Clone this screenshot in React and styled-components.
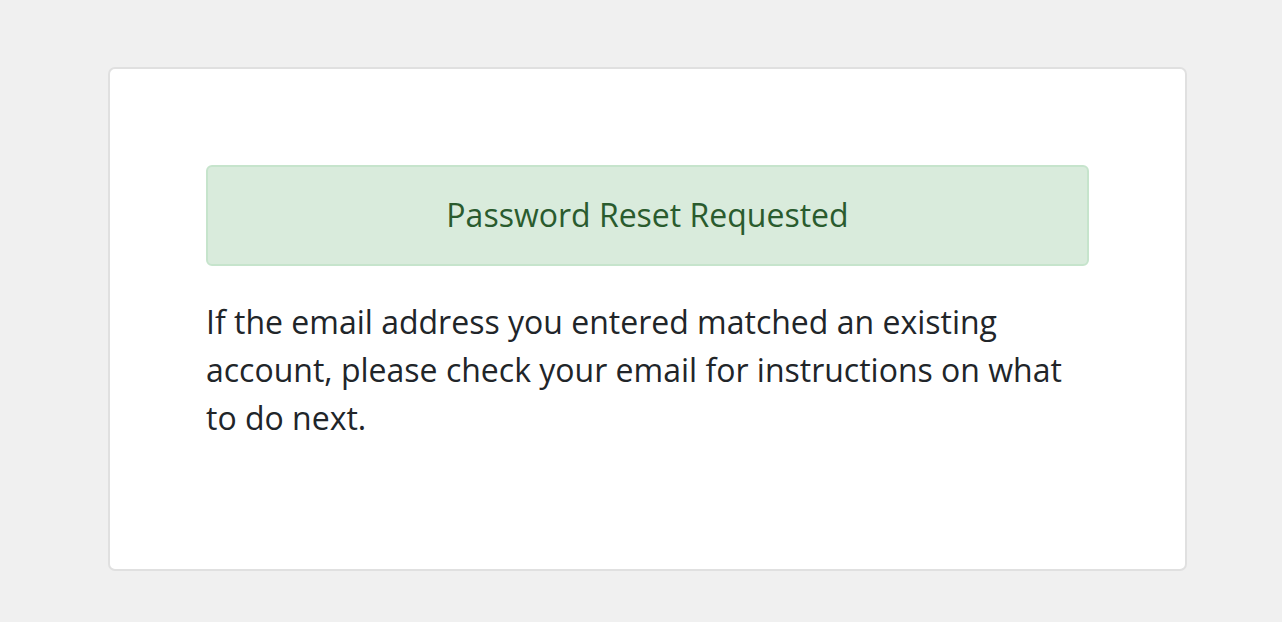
import React from "react";
import styled, { createGlobalStyle } from "styled-components";

const Global = createGlobalStyle`
  html, body { margin: 0; padding: 0; background: #f0f0f0; }
  body { font-family: "Open Sans", "Noto Sans", sans-serif; }
`;

const Page = styled.div`
  padding: 67px 95px 51px 108px;
`;

const Card = styled.div`
  background: #fff;
  border: 2px solid #e0e0e0;
  border-radius: 7px;
  padding: 96px 96px 89px 96px;
  min-height: 315px;
`;

const Alert = styled.div`
  background: #d9ebdc;
  border: 2px solid #c6e4cc;
  border-radius: 6px;
  color: #2a5b2e;
  font-size: 32px;
  line-height: 40px;
  text-align: center;
  padding: 28px 20px 29px;
`;

const Message = styled.p`
  margin: 32px 0 0;
  color: #212529;
  font-size: 32px;
  line-height: 48px;
`;

export default function App() {
  return (
    <>
      <Global />
      <Page>
        <Card>
          <Alert>Password Reset Requested</Alert>
          <Message>
            If the email address you entered matched an existing account, please check your email for instructions on what to do next.
          </Message>
        </Card>
      </Page>
    </>
  );
}
